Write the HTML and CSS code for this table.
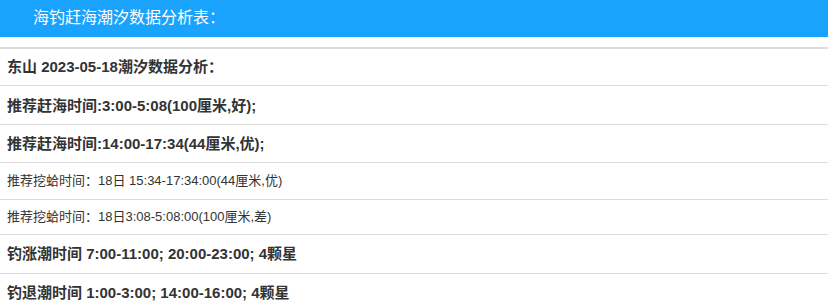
FILE: index.html
```html
<!DOCTYPE html>
<html lang="zh">
<head>
<meta charset="utf-8">
<link rel="stylesheet" href="styles.css">
</head>
<body>
<div class="header">海钓赶海潮汐数据分析表：</div>
<div class="list">
  <div class="row r1 bold">东山 2023-05-18潮汐数据分析：</div>
  <div class="row r2 bold">推荐赶海时间:3:00-5:08(100厘米,好);</div>
  <div class="row r3 bold">推荐赶海时间:14:00-17:34(44厘米,优);</div>
  <div class="row r4 small">推荐挖蛤时间：18日 15:34-17:34:00(44厘米,优)</div>
  <div class="row r5 small">推荐挖蛤时间：18日3:08-5:08:00(100厘米,差)</div>
  <div class="row r6 big">钓涨潮时间 7:00-11:00; 20:00-23:00; 4颗星</div>
  <div class="row r7 big">钓退潮时间 1:00-3:00; 14:00-16:00; 4颗星</div>
</div>
</body>
</html>
```
FILE: styles.css
```css
html, body {
  margin: 0;
  padding: 0;
  background: #fff;
  font-family: "Liberation Sans", "Noto Sans CJK SC", sans-serif;
  color: #333;
}
.header {
  height: 37px;
  line-height: 36px;
  background: #1aa3fd;
  color: #fff;
  font-size: 16px;
  padding-left: 33px;
  box-sizing: border-box;
}
.list {
  margin-top: 10px;
  border-top: 2px solid #dcdcdc;
}
.row {
  padding: 10px 7px;
  border-bottom: 1px solid #dcdcdc;
  white-space: nowrap;
}
.bold {
  font-size: 15px;
  font-weight: bold;
}
.small {
  font-size: 13px;
}
.big {
  font-size: 15px;
  font-weight: bold;
}
.r1 { line-height: 16px; }
.r2 { line-height: 18px; padding-top: 11px; padding-bottom: 9px; }
.r3 { line-height: 17px; }
.r4 { line-height: 16px; }
.r5 { line-height: 14px; }
.r6 { line-height: 18px; }
.r7 { line-height: 18px; }
```
